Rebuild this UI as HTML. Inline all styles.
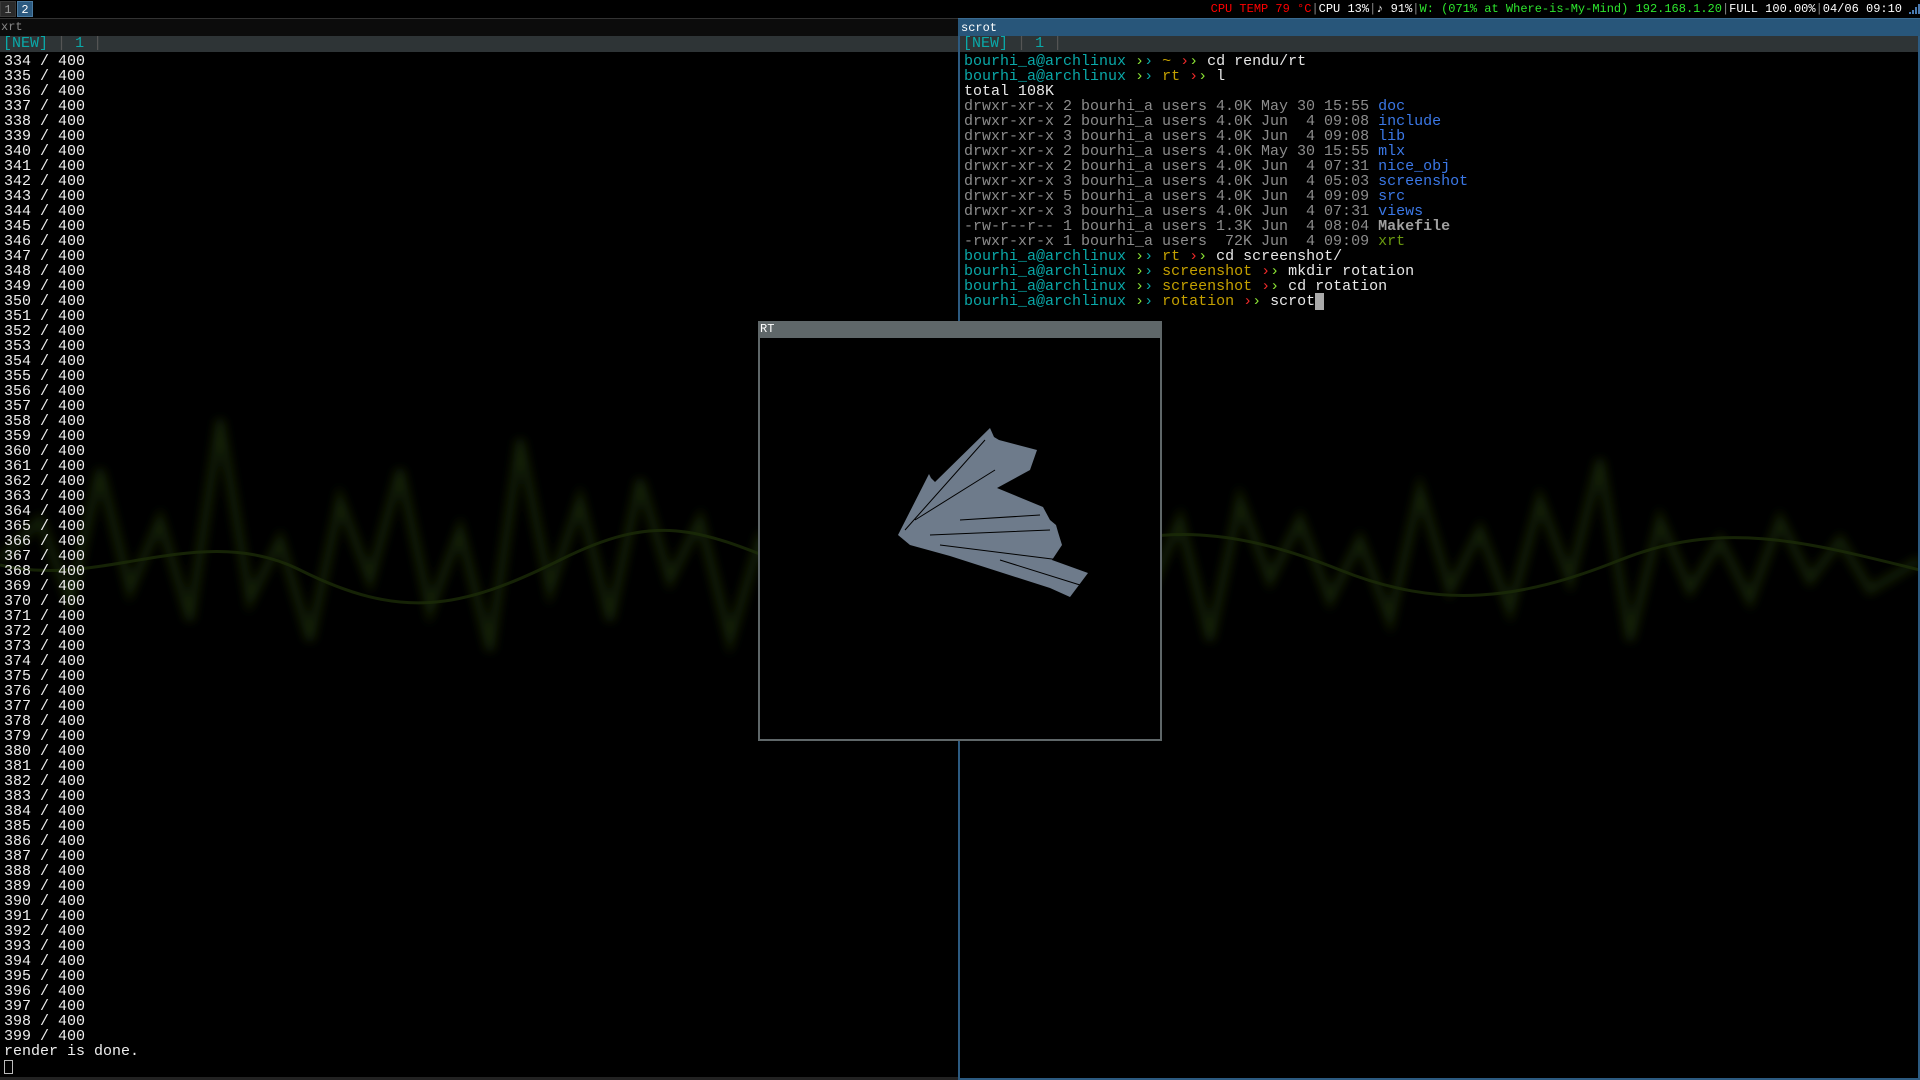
<!DOCTYPE html>
<html><head><meta charset="utf-8"><style>
*{margin:0;padding:0;box-sizing:border-box}
body{width:1920px;height:1080px;background:#000;overflow:hidden;position:relative;font-family:"Liberation Mono",monospace;color:#e8e8e8}
.abs{position:absolute}
pre{font-family:"Liberation Mono",monospace;font-size:15px;line-height:15px;white-space:pre}
#bar{left:0;top:0;width:1920px;height:18px;background:#000;font-size:12px;line-height:18px}
.ws{position:absolute;top:1px;width:16px;height:16px;line-height:16px;text-align:center;font-size:12px}
.c{color:#0aa8a8}.g{color:#8ae234}.r{color:#ef2929}.y{color:#c4a000}.b{color:#3b78e7}.p{color:#8c8c8c}.o{color:#6a9a10}.m{color:#a0a0a0;font-weight:bold}
</style></head><body>
<svg class="abs" style="left:0;top:0" width="1920" height="1080">
<defs><filter id="bl"><feGaussianBlur stdDeviation="5"/></filter></defs>
<g filter="url(#bl)" stroke="#2c440c" fill="none" stroke-width="8" opacity="0.5">
<path d="M0 560 L40 520 L70 600 L100 470 L130 590 L160 520 L190 620 L220 420 L250 600 L280 540 L310 640 L340 500 L370 580 L400 470 L430 610 L460 530 L490 650 L520 440 L550 590 L580 500 L610 620 L640 480 L670 580 L700 520 L730 640 L760 540 L790 600 L820 480 L850 600 L880 530 L910 620 L940 500 L970 580 L1000 470 L1030 610 L1060 530 L1090 600 L1120 480 L1150 590 L1180 520 L1210 640 L1240 500 L1270 580 L1300 520 L1330 600 L1360 540 L1390 620 L1420 490 L1450 590 L1480 530 L1510 610 L1540 500 L1570 580 L1600 460 L1630 640 L1660 520 L1690 590 L1720 540 L1750 600 L1780 520 L1810 580 L1840 540 L1870 590 L1920 560"/>
</g>
<g stroke="#1c2c08" fill="none" stroke-width="3" opacity="0.8">
<path d="M0 565 C100 590 200 520 300 570 S460 610 560 560 S700 530 800 570 S960 600 1060 560 S1240 530 1340 570 S1520 600 1620 560 S1800 540 1920 570"/>
</g>
</svg>

<div id="bar" class="abs">
<div class="ws" style="left:0;background:#2a2a2a;color:#999;border:1px solid #3a3a3a">1</div>
<div class="ws" style="left:17px;background:#2c5a80;color:#fff;border:1px solid #4a7aa0">2</div>
<div class="abs" style="right:18px;top:0;white-space:pre"><span style="color:#f00">CPU TEMP 79 °C</span><span style="color:#888">|</span><span style="color:#fff">CPU 13%</span><span style="color:#888">|</span><span style="color:#fff">♪ 91%</span><span style="color:#888">|</span><span style="color:#2ee62e">W: (071% at Where-is-My-Mind) 192.168.1.20</span><span style="color:#888">|</span><span style="color:#fff">FULL 100.00%</span><span style="color:#888">|</span><span style="color:#fff">04/06 09:10</span></div>
<svg class="abs" style="left:1908px;top:3px" width="12" height="12"><path d="M1 11h2v-2h-2zM4 11h2v-4h-2zM7 11h2v-7h-2zM10 11h2v-10h-2z" fill="#4a7ab0"/></svg>
</div>

<div class="abs" style="left:0;top:18px;width:958px;height:1px;background:#333"></div>
<div class="abs" style="left:0;top:19px;width:958px;height:17px;background:#0c0c0c;color:#888;font-size:12px;line-height:17px;padding-left:1px">xrt</div>
<div class="abs" style="left:0;top:36px;width:958px;height:16px;background:#2e3436;font-size:15px;line-height:16px;white-space:pre;padding-left:3px"><span class="c">[NEW]</span> <span style="color:#555">|</span> <span class="c">1</span> <span style="color:#555">|</span></div>
<pre class="abs" style="left:4px;top:54px;color:#eee">334 / 400
335 / 400
336 / 400
337 / 400
338 / 400
339 / 400
340 / 400
341 / 400
342 / 400
343 / 400
344 / 400
345 / 400
346 / 400
347 / 400
348 / 400
349 / 400
350 / 400
351 / 400
352 / 400
353 / 400
354 / 400
355 / 400
356 / 400
357 / 400
358 / 400
359 / 400
360 / 400
361 / 400
362 / 400
363 / 400
364 / 400
365 / 400
366 / 400
367 / 400
368 / 400
369 / 400
370 / 400
371 / 400
372 / 400
373 / 400
374 / 400
375 / 400
376 / 400
377 / 400
378 / 400
379 / 400
380 / 400
381 / 400
382 / 400
383 / 400
384 / 400
385 / 400
386 / 400
387 / 400
388 / 400
389 / 400
390 / 400
391 / 400
392 / 400
393 / 400
394 / 400
395 / 400
396 / 400
397 / 400
398 / 400
399 / 400
render is done.</pre>
<div class="abs" style="left:4px;top:1060px;width:9px;height:14px;border:1px solid #bbb"></div>
<div class="abs" style="left:0;top:1077px;width:958px;height:3px;background:#222"></div>

<div class="abs" style="left:958px;top:18px;width:962px;height:1062px;border:2px solid #2c5a80;border-top:none"></div>
<div class="abs" style="left:958px;top:18px;width:962px;height:18px;background:#28567a;color:#fff;font-size:12px;line-height:18px;padding-left:3px;border-top:1px solid #3a6a90">scrot</div>
<div class="abs" style="left:960px;top:36px;width:958px;height:16px;background:#2e3436;font-size:15px;line-height:16px;white-space:pre;padding-left:3px"><span class="c">[NEW]</span> <span style="color:#555">|</span> <span class="c">1</span> <span style="color:#555">|</span></div>
<pre class="abs" style="left:964px;top:54px"><span class="c">bourhi_a@archlinux</span> <span class="g">›</span><span class="c">›</span> <span class="y">~</span> <span class="r">›</span><span class="g">›</span> cd rendu/rt
<span class="c">bourhi_a@archlinux</span> <span class="g">›</span><span class="c">›</span> <span class="y">rt</span> <span class="r">›</span><span class="g">›</span> l
total 108K
<span class="p">drwxr-xr-x 2 bourhi_a users 4.0K May 30 15:55</span> <span class="b">doc</span>
<span class="p">drwxr-xr-x 2 bourhi_a users 4.0K Jun  4 09:08</span> <span class="b">include</span>
<span class="p">drwxr-xr-x 3 bourhi_a users 4.0K Jun  4 09:08</span> <span class="b">lib</span>
<span class="p">drwxr-xr-x 2 bourhi_a users 4.0K May 30 15:55</span> <span class="b">mlx</span>
<span class="p">drwxr-xr-x 2 bourhi_a users 4.0K Jun  4 07:31</span> <span class="b">nice_obj</span>
<span class="p">drwxr-xr-x 3 bourhi_a users 4.0K Jun  4 05:03</span> <span class="b">screenshot</span>
<span class="p">drwxr-xr-x 5 bourhi_a users 4.0K Jun  4 09:09</span> <span class="b">src</span>
<span class="p">drwxr-xr-x 3 bourhi_a users 4.0K Jun  4 07:31</span> <span class="b">views</span>
<span class="p">-rw-r--r-- 1 bourhi_a users 1.3K Jun  4 08:04</span> <span class="m">Makefile</span>
<span class="p">-rwxr-xr-x 1 bourhi_a users  72K Jun  4 09:09</span> <span class="o">xrt</span>
<span class="c">bourhi_a@archlinux</span> <span class="g">›</span><span class="c">›</span> <span class="y">rt</span> <span class="r">›</span><span class="g">›</span> cd screenshot/
<span class="c">bourhi_a@archlinux</span> <span class="g">›</span><span class="c">›</span> <span class="y">screenshot</span> <span class="r">›</span><span class="g">›</span> mkdir rotation
<span class="c">bourhi_a@archlinux</span> <span class="g">›</span><span class="c">›</span> <span class="y">screenshot</span> <span class="r">›</span><span class="g">›</span> cd rotation
<span class="c">bourhi_a@archlinux</span> <span class="g">›</span><span class="c">›</span> <span class="y">rotation</span> <span class="r">›</span><span class="g">›</span> scrot<span style="background:#aaa"> </span></pre>

<div class="abs" style="left:758px;top:321px;width:404px;height:420px;background:#000;border:2px solid #5f6769"></div>
<div class="abs" style="left:758px;top:321px;width:404px;height:17px;background:#5f6769;color:#fff;font-size:12px;line-height:17px;padding-left:2px">RT</div>
<svg class="abs" style="left:0;top:0" width="1920" height="1080">
<polygon fill="#6e7b8b" points="898,535 929,474 931,478 935,482 990,428 994,437 999,440 1037,450 1030,470 997,488 1043,507 1050,520 1056,525 1058,532 1062,545 1052,560 1088,573 1070,597 1050,588 950,556 910,545"/>
<g stroke="#000" stroke-width="1" fill="none">
<path d="M905 530 L985 440 M915 520 L995 470 M930 535 L1050 530 M940 545 L1060 560 M960 520 L1040 515 M1000 560 L1080 585"/>
</g>
</svg>
</body></html>
